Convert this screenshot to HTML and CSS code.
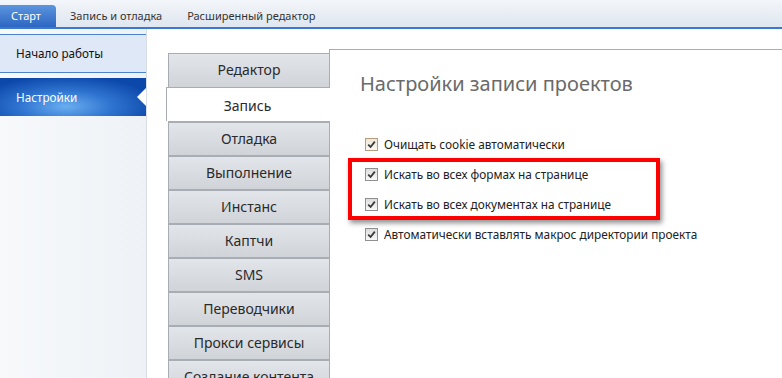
FILE: index.html
```html
<!DOCTYPE html>
<html lang="ru">
<head>
  <meta charset="UTF-8">
  <title>Настройки</title>
  <link rel="stylesheet" href="styles.css">
</head>
<body>
  <!-- верхние вкладки -->
  <div class="topbar">
    <div class="toptab active">Старт</div>
    <div class="toptab">Запись и отладка</div>
    <div class="toptab">Расширенный редактор</div>
  </div>

  <div class="main">
    <!-- левое меню -->
    <div class="sidebar">
      <div class="side-item">Начало работы</div>
      <div class="side-item selected">Настройки</div>
    </div>

    <div class="workspace">
      <!-- вертикальные вкладки -->
      <div class="vtabs">
        <div class="vtab">Редактор</div>
        <div class="vtab active">Запись</div>
        <div class="vtab">Отладка</div>
        <div class="vtab">Выполнение</div>
        <div class="vtab">Инстанс</div>
        <div class="vtab">Каптчи</div>
        <div class="vtab">SMS</div>
        <div class="vtab">Переводчики</div>
        <div class="vtab">Прокси сервисы</div>
        <div class="vtab">Создание контента</div>
      </div>

      <div class="panel">
        <h1 class="title">Настройки записи проектов</h1>
        <div class="options">
          <label class="option"><span class="box hot"><svg viewBox="0 0 9 9"><path d="M1.2 4.6 L3.6 7 L7.8 1.6" /></svg></span>Очищать cookie автоматически</label>
          <label class="option"><span class="box"><svg viewBox="0 0 9 9"><path d="M1.2 4.6 L3.6 7 L7.8 1.6" /></svg></span>Искать во всех формах на странице</label>
          <label class="option"><span class="box"><svg viewBox="0 0 9 9"><path d="M1.2 4.6 L3.6 7 L7.8 1.6" /></svg></span>Искать во всех документах на странице</label>
          <label class="option"><span class="box"><svg viewBox="0 0 9 9"><path d="M1.2 4.6 L3.6 7 L7.8 1.6" /></svg></span>Автоматически вставлять макрос директории проекта</label>
        </div>
        <!-- красная рамка-пометка -->
        <div class="highlight"></div>
      </div>
    </div>
  </div>
</body>
</html>
```

FILE: styles.css
```css
/* Stylesheet */
body {
  margin: 0;
  width: 782px;
  height: 378px;
  overflow: hidden;
  font-family: "Noto Sans", "Liberation Sans", sans-serif;
  color: #1e1e1e;
  background: #ffffff;
}

.topbar {
  height: 27px;
  display: flex;
  align-items: flex-end;
  background: linear-gradient(#f3f6fa, #dfe6ef);
  border-bottom: 2px solid #3a78d2;
}

.toptab {
  height: 22px;
  line-height: 22px;
  font-size: 11px;
  color: #333;
  padding: 0 12px 0 13px;
}

.toptab.active {
  width: 56px;
  box-sizing: border-box;
  padding: 0 0 0 11px;
  color: #fff;
  background: linear-gradient(#5c95de, #2d66c2);
  border-top-right-radius: 4px;
  margin-right: 1px;
}

.main {
  display: flex;
  height: 349px;
}

.sidebar {
  width: 147px;
  flex-shrink: 0;
  box-sizing: border-box;
  padding-top: 5px;
  background: linear-gradient(to right, #f7f9fb, #eef2f6);
  border-right: 1px solid #d9dee4;
}

.side-item {
  height: 37px;
  line-height: 37px;
  padding-left: 16px;
  font-size: 11.7px;
  color: #111;
  background: #dfe8f6;
  border-top: 1px solid #4a82d0;
  border-bottom: 1px solid #4a82d0;
  margin-bottom: 5px;
  position: relative;
}

.side-item.selected {
  color: #fff;
  border: none;
  height: 38px;
  line-height: 38px;
  background: radial-gradient(ellipse 70% 90% at 45% 75%, #6aaef0, #2f74d0 45%, #0c48aa 90%);
}

.side-item.selected::after {
  content: "";
  position: absolute;
  right: 0;
  top: 10px;
  border-right: 9px solid #ffffff;
  border-top: 9px solid transparent;
  border-bottom: 9px solid transparent;
}

.workspace {
  flex: 1;
  display: flex;
  padding: 20px 0 0 21px;
}

.vtabs {
  width: 162px;
  margin-top: 4px;
  margin-right: -1px;
  position: relative;
  z-index: 1;
}

.vtab {
  height: 32px;
  line-height: 32px;
  text-align: center;
  font-size: 14px;
  color: #2a2a2a;
  background: linear-gradient(#e2e5e9, #d0d4d9);
  border: 1px solid #a8adb4;
  border-top: 2px solid #a8adb4;
  border-bottom: none;
}

.vtab:first-child {
  border-top-width: 1px;
  height: 33px;
}

.vtab.active {
  background: #ffffff;
  border-top: 1px solid #a8adb4;
  border-right: none;
  margin-left: -2px;
  height: 33px;
  padding-right: 2px;
  line-height: 35px;
}

.panel {
  flex: 1;
  position: relative;
  border-top: 1px solid #a9adb3;
  border-left: 1px solid #a9adb3;
  padding-left: 30px;
}

.title {
  margin: 20px 0 0 0;
  font-size: 20px;
  font-weight: normal;
  color: #6a6a6a;
  line-height: 28px;
}

.options {
  margin-top: 31px;
  margin-left: 5px;
}

.option {
  display: flex;
  align-items: center;
  height: 30px;
  font-size: 11.8px;
  color: #222;
}

.box {
  width: 11px;
  height: 11px;
  border: 1px solid #8e9092;
  background: linear-gradient(#dedede, #f8f8f8);
  margin-right: 6px;
  display: flex;
  align-items: center;
  justify-content: center;
}

.box.hot {
  border-color: #b49d7e;
  background: linear-gradient(#eee6d8, #fbf8f2);
}

.box svg {
  width: 9px;
  height: 9px;
  fill: none;
  stroke: #3a3a3a;
  stroke-width: 1.8;
}

.highlight {
  position: absolute;
  left: 18px;
  top: 108px;
  width: 304px;
  height: 54px;
  border: 4px solid #ff0000;
  box-shadow: 2px 3px 5px rgba(0, 0, 0, 0.45);
}
```
